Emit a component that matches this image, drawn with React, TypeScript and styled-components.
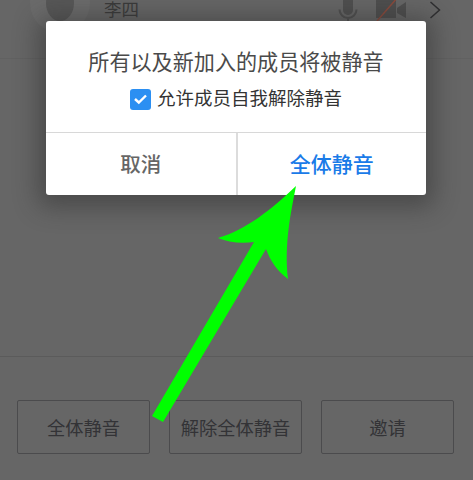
import * as React from 'react';
import styled, { createGlobalStyle } from 'styled-components';

const GlobalStyle = createGlobalStyle`
   html, body {
      margin: 0;
      padding: 0;
      background: #666;
   }
   * {
      box-sizing: border-box;
   }
`;

const Page = styled.div`
   position: relative;
   width: 473px;
   height: 480px;
   overflow: hidden;
   display: flex;
   flex-direction: column;
   background: #666;
   font-family: 'Liberation Sans', 'Noto Sans CJK SC', sans-serif;
`;

const MemberRow = styled.div`
   height: 86px;
   margin-top: -27px;
   flex-shrink: 0;
   display: flex;
   align-items: flex-start;
   padding: 0 32px 0 30px;
   border-bottom: 1px solid #616161;
`;

const Avatar = styled.div`
   width: 60px;
   height: 60px;
   border-radius: 50%;
   background: #6b6b6b;
   display: flex;
   justify-content: center;
   align-items: center;
   flex-shrink: 0;
`;

const AvatarHead = styled.div`
   width: 28px;
   height: 36px;
   border-radius: 50%;
   background: #575757;
`;

const MemberName = styled.div`
   margin-left: 14px;
   margin-top: 27px;
   flex: 1;
   font-size: 17.5px;
   line-height: 20px;
   color: #3a3a3a;
`;

const RowIcons = styled.div`
   display: flex;
   align-items: flex-start;
   margin-top: 26px;
`;

const Spacer = styled.div`
   flex: 1;
`;

const Footer = styled.div`
   height: 124px;
   flex-shrink: 0;
   border-top: 1px solid #5b5b5b;
   padding: 43px 18px 0 17px;
   display: flex;
   gap: 19px;
   align-items: flex-start;
`;

const FooterButton = styled.div`
   width: 133px;
   height: 54px;
   border: 1px solid #4b4b4d;
   border-radius: 2px;
   display: flex;
   align-items: center;
   justify-content: center;
   font-size: 18.3px;
   color: #333336;
`;

const Dialog = styled.div`
   position: absolute;
   left: 46px;
   top: 21px;
   width: 380px;
   height: 174px;
   background: #fff;
   border-radius: 3px;
   box-shadow: 0 4px 24px 8px rgba(40, 40, 40, 0.45);
   display: flex;
   flex-direction: column;
`;

const DialogBody = styled.div`
   height: 112px;
   flex-shrink: 0;
   padding-top: 29px;
   display: flex;
   flex-direction: column;
   align-items: center;
   border-bottom: 1px solid #d8d8d8;
`;

const DialogTitle = styled.div`
   font-size: 21.1px;
   line-height: 26px;
   color: #4a4a4a;
`;

const AllowRow = styled.div`
   margin-top: 11px;
   display: flex;
   align-items: center;
   gap: 6px;
   font-size: 18.5px;
   line-height: 24px;
   color: #333;
`;

const CheckBox = styled.div`
   width: 21px;
   height: 21px;
   border-radius: 3px;
   background: #2b8ff2;
   display: flex;
   align-items: center;
   justify-content: center;
`;

const DialogActions = styled.div`
   flex: 1;
   display: flex;
`;

const DialogAction = styled.div<{ $primary?: boolean }>`
   display: flex;
   align-items: center;
   justify-content: center;
   padding-bottom: 2px;
   width: ${p => (p.$primary ? '190.5px' : '189.5px')};
   font-size: ${p => (p.$primary ? '21px' : '20.5px')};
   color: ${p => (p.$primary ? '#1a7be8' : '#666')};
   font-weight: 500;
   border-left: ${p => (p.$primary ? '2px solid #dcdcdc' : 'none')};
`;

const ArrowOverlay = styled.svg`
   position: absolute;
   left: 0;
   top: 0;
   pointer-events: none;
`;

export default function App() {
   return (
      <Page>
         <GlobalStyle />
         <MemberRow>
            <Avatar>
               <AvatarHead />
            </Avatar>
            <MemberName>李四</MemberName>
            <RowIcons>
               <svg width="24" height="24" viewBox="0 0 24 24" style={{ marginRight: 15 }}>
                  <rect x="7" y="-4" width="10" height="20" rx="5" fill="#4f4f4f" />
                  <path d="M3.500 10.500a8.500 8.500 0 0 0 17 0M12 19v3" fill="none" stroke="#4f4f4f" strokeWidth="2" />
               </svg>
               <svg width="32" height="24" viewBox="0 0 32 24" style={{ marginRight: 22, overflow: 'visible' }}>
                  <path d="M1 1h20v18H1zM22 9l9-6v16l-9-5z" fill="#4e4e4e" />
                  <path d="M2 22L23-2" stroke="#8a4a3c" strokeWidth="1.500" />
               </svg>
               <svg width="12" height="24" viewBox="0 0 12 24">
                  <path d="M1.500 3l9 8-9 8" fill="none" stroke="#2e2e30" strokeWidth="1.500" />
               </svg>
            </RowIcons>
         </MemberRow>
         <Spacer />
         <Footer>
            <FooterButton>全体静音</FooterButton>
            <FooterButton>解除全体静音</FooterButton>
            <FooterButton>邀请</FooterButton>
         </Footer>
         <Dialog>
            <DialogBody>
               <DialogTitle>所有以及新加入的成员将被静音</DialogTitle>
               <AllowRow>
                  <CheckBox>
                     <svg width="15" height="12" viewBox="0 0 15 12">
                        <path d="M2 6l3.800 3.500L13 2.500" fill="none" stroke="#fff" strokeWidth="2.400" />
                     </svg>
                  </CheckBox>
                  允许成员自我解除静音
               </AllowRow>
            </DialogBody>
            <DialogActions>
               <DialogAction>取消</DialogAction>
               <DialogAction $primary>全体静音</DialogAction>
            </DialogActions>
         </Dialog>
         <ArrowOverlay width="473" height="480" viewBox="0 0 473 480">
            <path
               d="M296 186C291 212 284 244 288 279C277 271 270 260 266 249L163 422L152 416L254 242C240 244 228 242 218 238C246 230 272 209 296 186Z"
               fill="#00ff00"
            />
         </ArrowOverlay>
      </Page>
   );
}
